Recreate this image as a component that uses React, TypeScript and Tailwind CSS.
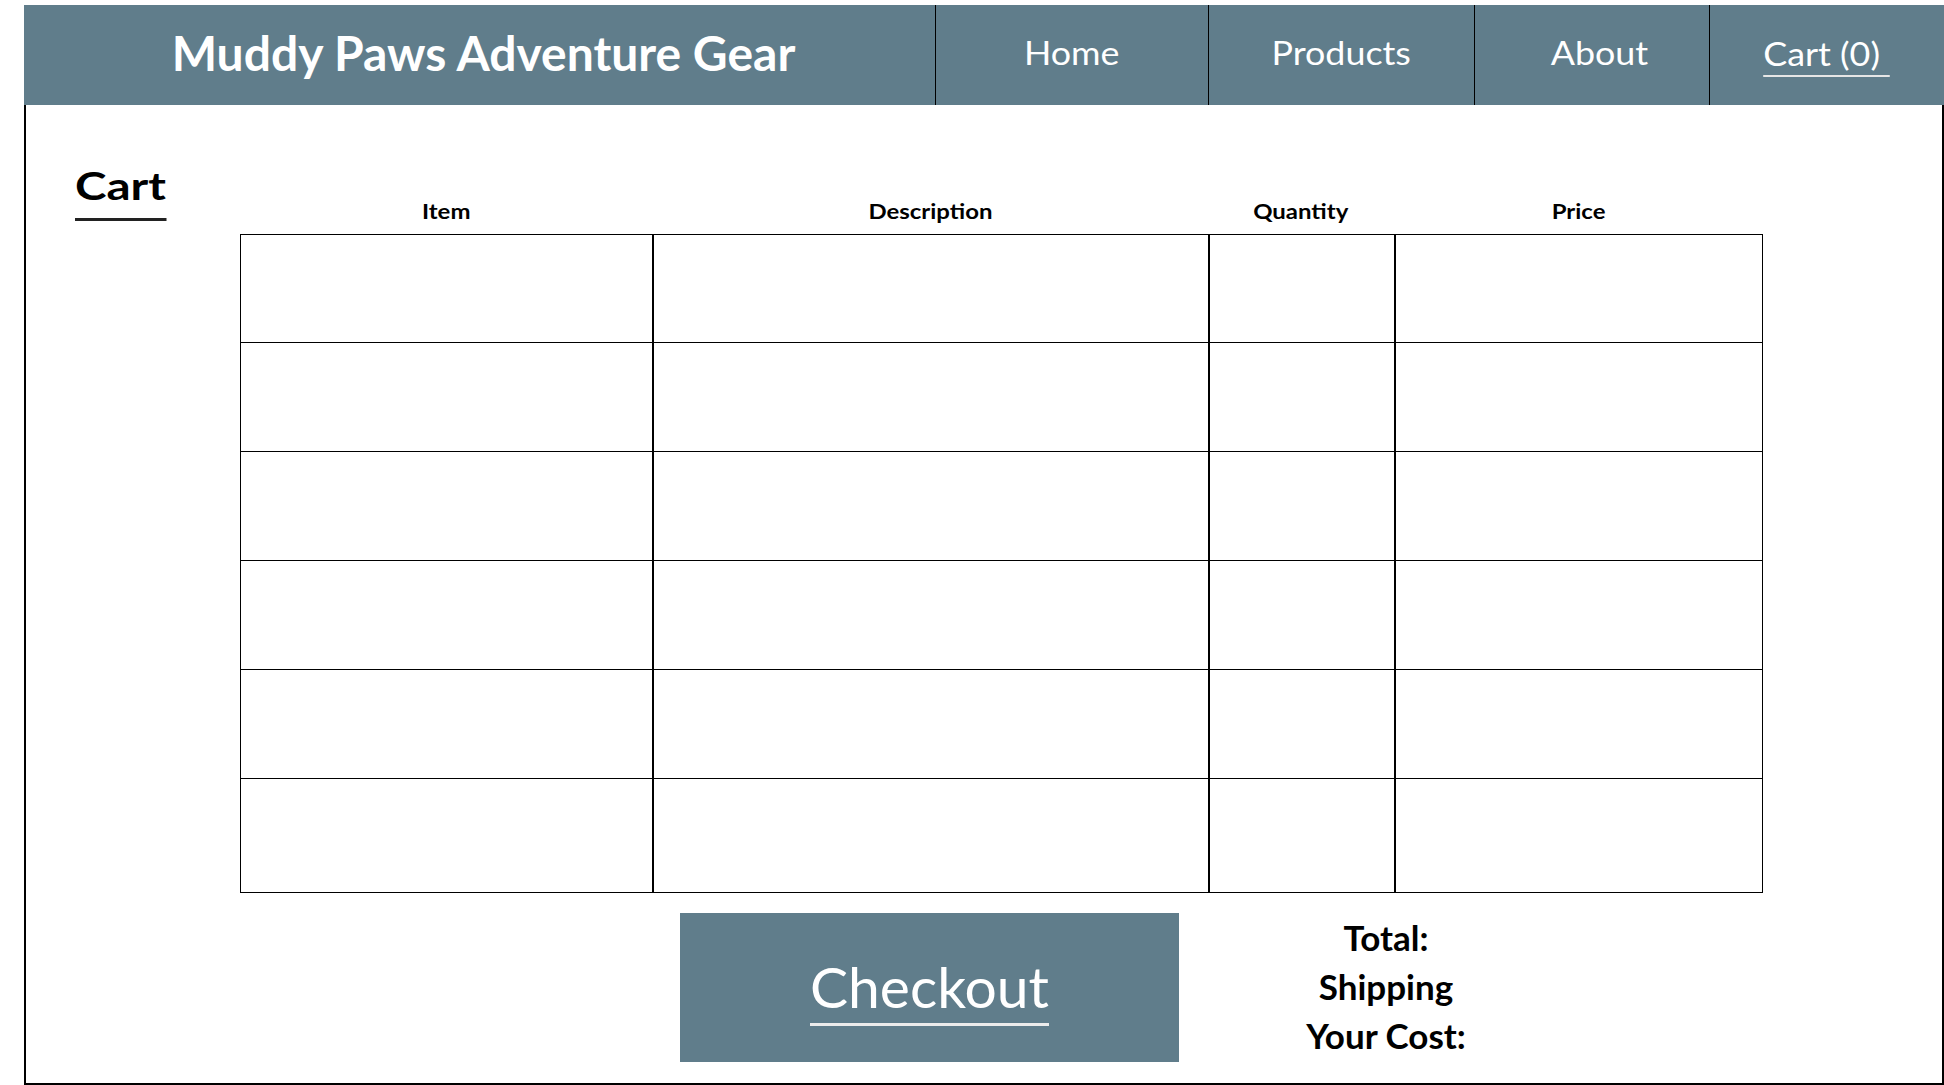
import React from "react";

const navItems = [
  { label: "Home", cell: "w-[273px]" },
  { label: "Products", cell: "w-[266px]" },
  { label: "About", cell: "w-[235px] pl-[14px]" },
];

const columns = ["Item", "Description", "Quantity", "Price"];

// row heights include the 1px top rule on rows after the first
const rows = [
  "h-[107px]",
  "h-[109px] border-t",
  "h-[109px] border-t",
  "h-[109px] border-t",
  "h-[109px] border-t",
  "h-[114px] border-t",
];

function Header() {
  return (
    <header className="ml-[24px] mt-[5px] flex h-[100px] bg-[#607d8b] text-white">
      <div className="flex w-[911px] items-center justify-center pb-[4px] pl-[8px]">
        <h1 className="text-[48px] font-bold leading-none">Muddy Paws Adventure Gear</h1>
      </div>
      {navItems.map((n) => (
        <div
          key={n.label}
          className={`flex ${n.cell} items-center justify-center border-l border-black pb-[4px]`}
        >
          <span className="inline-block scale-x-[1.12] text-[32px] leading-none">{n.label}</span>
        </div>
      ))}
      <div className="flex w-[235px] items-center justify-center border-l border-black pt-[4px]">
        <span className="inline-block scale-x-[1.12] border-b-2 border-[#e6e6e6] pb-[5px] pr-[9px] text-[32px] leading-none">
          Cart (0)
        </span>
      </div>
    </header>
  );
}

function CartTable() {
  return (
    <div className="w-[1523px] pt-[94px]">
      <div className="grid grid-cols-[412px_556px_186px_369px] text-center">
        {columns.map((c) => (
          <div key={c} className="text-[21px] font-bold leading-[24px] text-black">
            <span className="inline-block scale-x-[1.14]">{c}</span>
          </div>
        ))}
      </div>
      <div className="mt-[11px] border border-black">
        {rows.map((r, i) => (
          <div key={i} className={`flex border-black ${r}`}>
            <div className="w-[411px]" />
            <div className="w-[556px] border-l-2 border-black" />
            <div className="w-[186px] border-l-2 border-black" />
            <div className="w-[368px] border-l-2 border-black" />
          </div>
        ))}
      </div>
    </div>
  );
}

export default function App() {
  return (
    <div className="h-[1085px] w-[1944px] overflow-hidden bg-white font-['Lato',sans-serif]">
      <Header />
      <main className="ml-[24px] h-[980px] w-[1920px] border-b-2 border-l-2 border-r-2 border-black">
        <div className="flex items-start">
          <div className="w-[214px] pl-[49px] pt-[61px]">
            <h2 className="inline-block origin-left scale-x-[1.22] border-b-[3px] border-[#222] pb-[13px] text-[39px] font-bold leading-none text-black">
              Cart
            </h2>
          </div>
          <CartTable />
        </div>

        <div className="mt-[20px] flex items-start pl-[654px]">
          <button
            type="button"
            className="flex h-[149px] w-[499px] items-center justify-center bg-[#607d8b] pt-[8px]"
          >
            <span className="inline-block border-b-[3px] border-[#ececec] pb-[8px] text-[57px] leading-none text-white">
              Checkout
            </span>
          </button>
          <div className="ml-[57px] w-[300px] text-center text-[35px] font-bold leading-[49px] text-black">
            <div>Total:</div>
            <div>Shipping</div>
            <div>Your Cost:</div>
          </div>
        </div>
      </main>
    </div>
  );
}
